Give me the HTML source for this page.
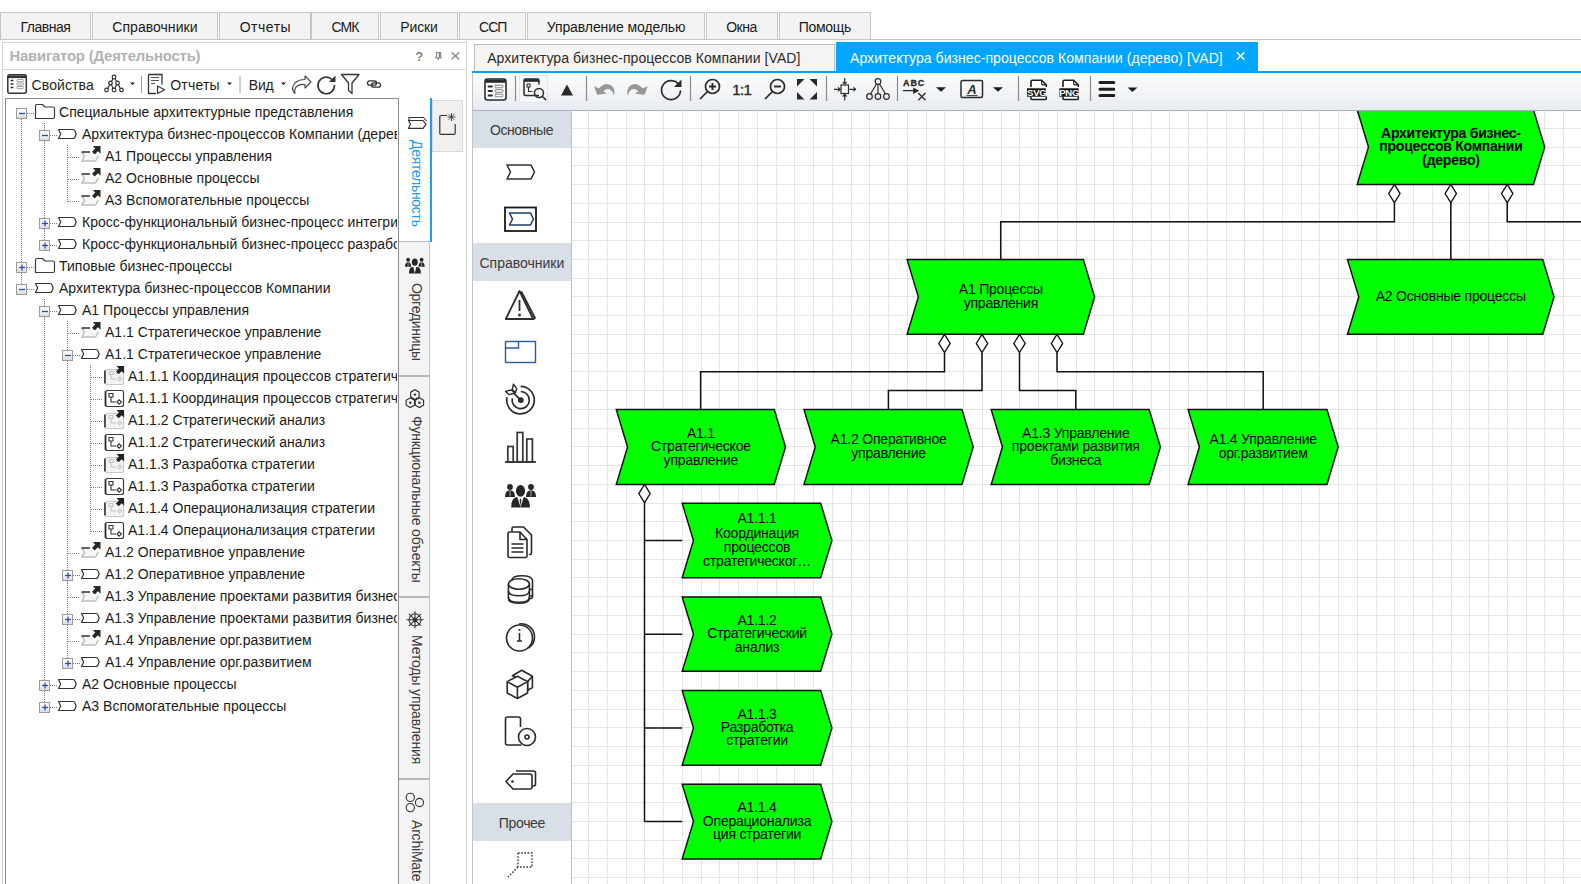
<!DOCTYPE html>
<html><head><meta charset="utf-8"><title>VAD</title>
<style>
html,body{margin:0;padding:0;width:1581px;height:884px;overflow:hidden;background:#fff;}
body{position:relative;font-family:"Liberation Sans", sans-serif;color:#1e1e1e;}
.a{position:absolute;}
.t{position:absolute;white-space:nowrap;line-height:16px;font-size:13.5px;}
.mt{position:absolute;top:12px;height:26px;background:#f3f3f3;border:1px solid #c6c6c6;}
svg{position:absolute;overflow:hidden;}
</style></head><body>
<div class="a" style="left:0;top:39px;width:1581px;height:1px;background:#c8c8c8"></div><div class="mt" style="left:0px;width:89px"></div><div class="t" style="left:20.45px;top:18.95px;font-size:14px;letter-spacing:-0.483px;color:#1a1a1a;">Главная</div><div class="mt" style="left:92px;width:124px"></div><div class="t" style="left:112.35px;top:18.95px;font-size:14px;letter-spacing:0.03px;color:#1a1a1a;">Справочники</div><div class="mt" style="left:219px;width:90px"></div><div class="t" style="left:239.70px;top:18.95px;font-size:14px;letter-spacing:0.52px;color:#1a1a1a;">Отчеты</div><div class="mt" style="left:311px;width:66px"></div><div class="t" style="left:331.55px;top:18.95px;font-size:14px;letter-spacing:-0.9px;color:#1a1a1a;">СМК</div><div class="mt" style="left:380px;width:76px"></div><div class="t" style="left:400.15px;top:18.95px;font-size:14px;letter-spacing:-0.075px;color:#1a1a1a;">Риски</div><div class="mt" style="left:459px;width:65px"></div><div class="t" style="left:478.95px;top:18.95px;font-size:14px;letter-spacing:-0.9px;color:#1a1a1a;">ССП</div><div class="mt" style="left:527px;width:176px"></div><div class="t" style="left:546.75px;top:18.95px;font-size:14px;letter-spacing:-0.088px;color:#1a1a1a;">Управление моделью</div><div class="mt" style="left:706px;width:70px"></div><div class="t" style="left:726.15px;top:18.95px;font-size:14px;letter-spacing:-0.433px;color:#1a1a1a;">Окна</div><div class="mt" style="left:779px;width:90px"></div><div class="t" style="left:798.80px;top:18.95px;font-size:14px;letter-spacing:-0.32px;color:#1a1a1a;">Помощь</div><div class="a" style="left:2px;top:42px;width:463px;height:850px;border:1px solid #d2d2d2;background:#fff"></div><div class="t" style="left:9.50px;top:47.87px;font-size:14.8px;letter-spacing:-0.152px;color:#b0b2b5;font-weight:bold;">Навигатор (Деятельность)</div><div class="a" style="left:3px;top:69px;width:462px;height:1px;background:#d2d2d2"></div><svg style="left:410px;top:48px" width="56" height="18" viewBox="0 0 56 18">
<text x="9.4" y="12.9" font-family="Liberation Sans" font-weight="bold" font-size="12.5" fill="#7d7d7d" text-anchor="middle">?</text>
<path d="M26.5 9.5V4.5h4.3" fill="none" stroke="#8a8a8a" stroke-width="1.1"/><rect x="28.6" y="4" width="2.6" height="5.4" fill="#8a8a8a"/>
<path d="M25 9.8h7M28.4 10v2.2" stroke="#8a8a8a" stroke-width="1.2"/>
<path d="M41.6 4.5l7.6 6.8M49.2 4.5l-7.6 6.8" stroke="#8a8a8a" stroke-width="1.5"/>
</svg><svg style="left:0px;top:70px" width="398" height="28" viewBox="0 70 398 28">
<g fill="none" stroke="#333" stroke-linejoin="round">
<rect x="7.8" y="74.8" width="18.5" height="18.5" rx="2" stroke-width="1.5" fill="#fff"/>
<path d="M7.8 76.8h18.5" stroke-width="2.6"/>
<path d="M10.5 80.5h3M10.5 84h3M10.5 87.5h3" stroke-width="1.7"/>
<rect x="17" y="79.5" width="6.5" height="2.2" rx="0.8" stroke="#888" stroke-width="0.8"/>
<rect x="17" y="83" width="6.5" height="2.2" rx="0.8" stroke="#888" stroke-width="0.8"/>
<rect x="17" y="86.5" width="6.5" height="2.2" rx="0.8" stroke="#888" stroke-width="0.8"/>
</g>
<g stroke="#333" stroke-width="1.2" fill="#fff">
<path d="M114 77l-3.5 6M114 77l3.5 6M110.5 83l-3 6M110.5 83l3 6M117.5 83l-3 6M117.5 83l3 6"/>
<circle cx="114" cy="77" r="1.8"/><circle cx="110.5" cy="83" r="1.8"/><circle cx="117.5" cy="83" r="1.8"/>
<circle cx="106.5" cy="90" r="1.8"/><circle cx="114" cy="90" r="1.8"/><circle cx="121.5" cy="90" r="1.8"/>
</g>
<path d="M130 82.5h5l-2.5 2.5z" fill="#222"/>
<path d="M141.5 76v17" stroke="#a0a0a0" stroke-width="1"/>
<path d="M148.5 74.5h13.5v10M148.5 74.5v19h7.5" stroke="#333" stroke-width="1.3" fill="none"/>
<path d="M151 77.5h8M151 80.5h8M151 83.5h4" stroke="#555" stroke-width="1"/>
<path d="M157.5 86v7.5l7-3.75z" stroke="#333" stroke-width="1.2" fill="#fff" stroke-linejoin="round"/>
<path d="M227 82.5h5l-2.5 2.5z" fill="#222"/>
<path d="M240 76v17" stroke="#a0a0a0" stroke-width="1"/>
<path d="M281 82.5h5l-2.5 2.5z" fill="#222"/>
<path d="M295 93.5q-5-4.5 0-10.5q3.5-3.5 10-3.5v-3.5l6 6-6 6v-3.5q-5.5-0.5-8.5 2q-2.5 2.5-1.5 7z" stroke="#444" stroke-width="1.1" fill="#fff" stroke-linejoin="round"/>
<path d="M332 79.5a8.3 8.3 0 1 0 2.5 5.5" stroke="#333" stroke-width="1.6" fill="none"/>
<path d="M335.5 75.5v6.5h-6.5z" fill="#333"/>
<path d="M341.5 74.5h17.5l-7 8.5v10.5l-3.5-3v-7.5z" stroke="#333" stroke-width="1.3" fill="none" stroke-linejoin="round"/>
<rect x="367.5" y="80.8" width="9" height="4.4" rx="2.2" stroke="#333" stroke-width="1.3" fill="none"/><rect x="371.5" y="82.8" width="9" height="4.4" rx="2.2" stroke="#333" stroke-width="1.3" fill="none"/>
</svg><div class="t" style="left:31.60px;top:76.55px;font-size:14px;letter-spacing:0.1px;color:#1e1e1e;">Свойства</div><div class="t" style="left:170.20px;top:76.85px;font-size:14px;letter-spacing:0.22px;color:#1e1e1e;">Отчеты</div><div class="t" style="left:248.80px;top:76.85px;font-size:14px;letter-spacing:-0.25px;color:#1e1e1e;">Вид</div><div class="a" style="left:5px;top:98px;width:392px;height:800px;border:1px solid #8a8f94;background:#fff"></div><svg style="left:0;top:0" width="398" height="884" viewBox="0 0 398 884"><defs><linearGradient id="eg" x1="0" y1="0" x2="0" y2="1"><stop offset="0" stop-color="#fdfdfd"/><stop offset="0.55" stop-color="#f0f0f0"/><stop offset="1" stop-color="#d9d9d9"/></linearGradient></defs><path d="M21.5 113V290 M27 113.5H34 M27 267.5H34 M27 289.5H34 M44.5 123V246 M50 135.5H57 M50 223.5H57 M50 245.5H57 M67.5 145V202 M68 157.5H80 M68 179.5H80 M68 201.5H80 M44.5 299V708 M50 311.5H57 M50 685.5H57 M50 707.5H57 M67.5 321V664 M68 333.5H80 M73 355.5H80 M68 553.5H80 M73 575.5H80 M68 597.5H80 M73 619.5H80 M68 641.5H80 M73 663.5H80 M90.5 365V532 M91 377.5H103 M91 399.5H103 M91 421.5H103 M91 443.5H103 M91 465.5H103 M91 487.5H103 M91 509.5H103 M91 531.5H103" stroke="#7a7a7a" stroke-width="1" stroke-dasharray="1 1" fill="none" shape-rendering="crispEdges"/><rect x="16.5" y="108.5" width="10" height="10" fill="url(#eg)" stroke="#9b9b9b" stroke-width="1"/><path d="M19 113.5h6" stroke="#2a4fb0" stroke-width="1.3"/><path d="M35.5 118.5V106.0q0-1.5 1.5-1.5h5.5l2.5 2.5h8q1.5 0 1.5 1.5V117.0q0 1.5-1.5 1.5z" fill="#fff" stroke="#3a3a3a" stroke-width="1.2" stroke-linejoin="round"/><rect x="39.5" y="130.5" width="10" height="10" fill="url(#eg)" stroke="#9b9b9b" stroke-width="1"/><path d="M42 135.5h6" stroke="#2a4fb0" stroke-width="1.3"/><path d="M58.5 129.5H73q1.5 0 2 1.5l1.2 3-1.2 3q-0.5 1.5-2 1.5H58.5l2.2-4.5z" fill="#fff" stroke="#333" stroke-width="1.2" stroke-linejoin="round"/><path d="M82 152l2.3 4.5-2.3 4.5H94.5q1.5 0 2-1.5l1.8-3.5" fill="#f7f7f7" stroke="#bdbdbd" stroke-width="1.5"/><path d="M81.5 152H90" stroke="#2e2e2e" stroke-width="1.5"/><path d="M92.8 146h7.7v7.7l-2.5-2.5-3.3 3.3-2.7-2.7 3.3-3.3z" fill="#262626"/><path d="M82 174l2.3 4.5-2.3 4.5H94.5q1.5 0 2-1.5l1.8-3.5" fill="#f7f7f7" stroke="#bdbdbd" stroke-width="1.5"/><path d="M81.5 174H90" stroke="#2e2e2e" stroke-width="1.5"/><path d="M92.8 168h7.7v7.7l-2.5-2.5-3.3 3.3-2.7-2.7 3.3-3.3z" fill="#262626"/><path d="M82 196l2.3 4.5-2.3 4.5H94.5q1.5 0 2-1.5l1.8-3.5" fill="#f7f7f7" stroke="#bdbdbd" stroke-width="1.5"/><path d="M81.5 196H90" stroke="#2e2e2e" stroke-width="1.5"/><path d="M92.8 190h7.7v7.7l-2.5-2.5-3.3 3.3-2.7-2.7 3.3-3.3z" fill="#262626"/><rect x="39.5" y="218.5" width="10" height="10" fill="url(#eg)" stroke="#9b9b9b" stroke-width="1"/><path d="M42 223.5h6" stroke="#2a4fb0" stroke-width="1.3"/><path d="M45 220.5v6" stroke="#2a4fb0" stroke-width="1.3"/><path d="M58.5 217.5H73q1.5 0 2 1.5l1.2 3-1.2 3q-0.5 1.5-2 1.5H58.5l2.2-4.5z" fill="#fff" stroke="#333" stroke-width="1.2" stroke-linejoin="round"/><rect x="39.5" y="240.5" width="10" height="10" fill="url(#eg)" stroke="#9b9b9b" stroke-width="1"/><path d="M42 245.5h6" stroke="#2a4fb0" stroke-width="1.3"/><path d="M45 242.5v6" stroke="#2a4fb0" stroke-width="1.3"/><path d="M58.5 239.5H73q1.5 0 2 1.5l1.2 3-1.2 3q-0.5 1.5-2 1.5H58.5l2.2-4.5z" fill="#fff" stroke="#333" stroke-width="1.2" stroke-linejoin="round"/><rect x="16.5" y="262.5" width="10" height="10" fill="url(#eg)" stroke="#9b9b9b" stroke-width="1"/><path d="M19 267.5h6" stroke="#2a4fb0" stroke-width="1.3"/><path d="M22 264.5v6" stroke="#2a4fb0" stroke-width="1.3"/><path d="M35.5 272.5V260.0q0-1.5 1.5-1.5h5.5l2.5 2.5h8q1.5 0 1.5 1.5V271.0q0 1.5-1.5 1.5z" fill="#fff" stroke="#3a3a3a" stroke-width="1.2" stroke-linejoin="round"/><rect x="16.5" y="284.5" width="10" height="10" fill="url(#eg)" stroke="#9b9b9b" stroke-width="1"/><path d="M19 289.5h6" stroke="#2a4fb0" stroke-width="1.3"/><path d="M35.5 283.5H50q1.5 0 2 1.5l1.2 3-1.2 3q-0.5 1.5-2 1.5H35.5l2.2-4.5z" fill="#fff" stroke="#333" stroke-width="1.2" stroke-linejoin="round"/><rect x="39.5" y="306.5" width="10" height="10" fill="url(#eg)" stroke="#9b9b9b" stroke-width="1"/><path d="M42 311.5h6" stroke="#2a4fb0" stroke-width="1.3"/><path d="M58.5 305.5H73q1.5 0 2 1.5l1.2 3-1.2 3q-0.5 1.5-2 1.5H58.5l2.2-4.5z" fill="#fff" stroke="#333" stroke-width="1.2" stroke-linejoin="round"/><path d="M82 328l2.3 4.5-2.3 4.5H94.5q1.5 0 2-1.5l1.8-3.5" fill="#f7f7f7" stroke="#bdbdbd" stroke-width="1.5"/><path d="M81.5 328H90" stroke="#2e2e2e" stroke-width="1.5"/><path d="M92.8 322h7.7v7.7l-2.5-2.5-3.3 3.3-2.7-2.7 3.3-3.3z" fill="#262626"/><rect x="62.5" y="350.5" width="10" height="10" fill="url(#eg)" stroke="#9b9b9b" stroke-width="1"/><path d="M65 355.5h6" stroke="#2a4fb0" stroke-width="1.3"/><path d="M81.5 349.5H96q1.5 0 2 1.5l1.2 3-1.2 3q-0.5 1.5-2 1.5H81.5l2.2-4.5z" fill="#fff" stroke="#333" stroke-width="1.2" stroke-linejoin="round"/><rect x="105.5" y="369.5" width="18" height="15" rx="2" fill="#f4f4f4" stroke="#c9c9c9" stroke-width="1.2"/><path d="M104.9 370.5v13" stroke="#333" stroke-width="1.6"/><path d="M109 371.5h4v3h-4zM111 374.5v4.5h5.5M118 379l1.8-2 1.8 2-1.8 2z" fill="none" stroke="#c2c2c2" stroke-width="1.1"/><path d="M116.5 366h7.6v7.6l-2.4-2.4-3 3-2.8-2.8 3-3z" fill="#222"/><rect x="105.5" y="390.5" width="18" height="16" rx="2" fill="#fff" stroke="#3a3a3a" stroke-width="1.2"/><path d="M105.5 391v15" stroke="#222" stroke-width="1.6"/><path d="M109 393.5h4v3.5h-4zM111 397v5h5M117 402l2.2-2.2 2.2 2.2-2.2 2.2z" fill="none" stroke="#333" stroke-width="1.1"/><rect x="105.5" y="413.5" width="18" height="15" rx="2" fill="#f4f4f4" stroke="#c9c9c9" stroke-width="1.2"/><path d="M104.9 414.5v13" stroke="#333" stroke-width="1.6"/><path d="M109 415.5h4v3h-4zM111 418.5v4.5h5.5M118 423l1.8-2 1.8 2-1.8 2z" fill="none" stroke="#c2c2c2" stroke-width="1.1"/><path d="M116.5 410h7.6v7.6l-2.4-2.4-3 3-2.8-2.8 3-3z" fill="#222"/><rect x="105.5" y="434.5" width="18" height="16" rx="2" fill="#fff" stroke="#3a3a3a" stroke-width="1.2"/><path d="M105.5 435v15" stroke="#222" stroke-width="1.6"/><path d="M109 437.5h4v3.5h-4zM111 441v5h5M117 446l2.2-2.2 2.2 2.2-2.2 2.2z" fill="none" stroke="#333" stroke-width="1.1"/><rect x="105.5" y="457.5" width="18" height="15" rx="2" fill="#f4f4f4" stroke="#c9c9c9" stroke-width="1.2"/><path d="M104.9 458.5v13" stroke="#333" stroke-width="1.6"/><path d="M109 459.5h4v3h-4zM111 462.5v4.5h5.5M118 467l1.8-2 1.8 2-1.8 2z" fill="none" stroke="#c2c2c2" stroke-width="1.1"/><path d="M116.5 454h7.6v7.6l-2.4-2.4-3 3-2.8-2.8 3-3z" fill="#222"/><rect x="105.5" y="478.5" width="18" height="16" rx="2" fill="#fff" stroke="#3a3a3a" stroke-width="1.2"/><path d="M105.5 479v15" stroke="#222" stroke-width="1.6"/><path d="M109 481.5h4v3.5h-4zM111 485v5h5M117 490l2.2-2.2 2.2 2.2-2.2 2.2z" fill="none" stroke="#333" stroke-width="1.1"/><rect x="105.5" y="501.5" width="18" height="15" rx="2" fill="#f4f4f4" stroke="#c9c9c9" stroke-width="1.2"/><path d="M104.9 502.5v13" stroke="#333" stroke-width="1.6"/><path d="M109 503.5h4v3h-4zM111 506.5v4.5h5.5M118 511l1.8-2 1.8 2-1.8 2z" fill="none" stroke="#c2c2c2" stroke-width="1.1"/><path d="M116.5 498h7.6v7.6l-2.4-2.4-3 3-2.8-2.8 3-3z" fill="#222"/><rect x="105.5" y="522.5" width="18" height="16" rx="2" fill="#fff" stroke="#3a3a3a" stroke-width="1.2"/><path d="M105.5 523v15" stroke="#222" stroke-width="1.6"/><path d="M109 525.5h4v3.5h-4zM111 529v5h5M117 534l2.2-2.2 2.2 2.2-2.2 2.2z" fill="none" stroke="#333" stroke-width="1.1"/><path d="M82 548l2.3 4.5-2.3 4.5H94.5q1.5 0 2-1.5l1.8-3.5" fill="#f7f7f7" stroke="#bdbdbd" stroke-width="1.5"/><path d="M81.5 548H90" stroke="#2e2e2e" stroke-width="1.5"/><path d="M92.8 542h7.7v7.7l-2.5-2.5-3.3 3.3-2.7-2.7 3.3-3.3z" fill="#262626"/><rect x="62.5" y="570.5" width="10" height="10" fill="url(#eg)" stroke="#9b9b9b" stroke-width="1"/><path d="M65 575.5h6" stroke="#2a4fb0" stroke-width="1.3"/><path d="M68 572.5v6" stroke="#2a4fb0" stroke-width="1.3"/><path d="M81.5 569.5H96q1.5 0 2 1.5l1.2 3-1.2 3q-0.5 1.5-2 1.5H81.5l2.2-4.5z" fill="#fff" stroke="#333" stroke-width="1.2" stroke-linejoin="round"/><path d="M82 592l2.3 4.5-2.3 4.5H94.5q1.5 0 2-1.5l1.8-3.5" fill="#f7f7f7" stroke="#bdbdbd" stroke-width="1.5"/><path d="M81.5 592H90" stroke="#2e2e2e" stroke-width="1.5"/><path d="M92.8 586h7.7v7.7l-2.5-2.5-3.3 3.3-2.7-2.7 3.3-3.3z" fill="#262626"/><rect x="62.5" y="614.5" width="10" height="10" fill="url(#eg)" stroke="#9b9b9b" stroke-width="1"/><path d="M65 619.5h6" stroke="#2a4fb0" stroke-width="1.3"/><path d="M68 616.5v6" stroke="#2a4fb0" stroke-width="1.3"/><path d="M81.5 613.5H96q1.5 0 2 1.5l1.2 3-1.2 3q-0.5 1.5-2 1.5H81.5l2.2-4.5z" fill="#fff" stroke="#333" stroke-width="1.2" stroke-linejoin="round"/><path d="M82 636l2.3 4.5-2.3 4.5H94.5q1.5 0 2-1.5l1.8-3.5" fill="#f7f7f7" stroke="#bdbdbd" stroke-width="1.5"/><path d="M81.5 636H90" stroke="#2e2e2e" stroke-width="1.5"/><path d="M92.8 630h7.7v7.7l-2.5-2.5-3.3 3.3-2.7-2.7 3.3-3.3z" fill="#262626"/><rect x="62.5" y="658.5" width="10" height="10" fill="url(#eg)" stroke="#9b9b9b" stroke-width="1"/><path d="M65 663.5h6" stroke="#2a4fb0" stroke-width="1.3"/><path d="M68 660.5v6" stroke="#2a4fb0" stroke-width="1.3"/><path d="M81.5 657.5H96q1.5 0 2 1.5l1.2 3-1.2 3q-0.5 1.5-2 1.5H81.5l2.2-4.5z" fill="#fff" stroke="#333" stroke-width="1.2" stroke-linejoin="round"/><rect x="39.5" y="680.5" width="10" height="10" fill="url(#eg)" stroke="#9b9b9b" stroke-width="1"/><path d="M42 685.5h6" stroke="#2a4fb0" stroke-width="1.3"/><path d="M45 682.5v6" stroke="#2a4fb0" stroke-width="1.3"/><path d="M58.5 679.5H73q1.5 0 2 1.5l1.2 3-1.2 3q-0.5 1.5-2 1.5H58.5l2.2-4.5z" fill="#fff" stroke="#333" stroke-width="1.2" stroke-linejoin="round"/><rect x="39.5" y="702.5" width="10" height="10" fill="url(#eg)" stroke="#9b9b9b" stroke-width="1"/><path d="M42 707.5h6" stroke="#2a4fb0" stroke-width="1.3"/><path d="M45 704.5v6" stroke="#2a4fb0" stroke-width="1.3"/><path d="M58.5 701.5H73q1.5 0 2 1.5l1.2 3-1.2 3q-0.5 1.5-2 1.5H58.5l2.2-4.5z" fill="#fff" stroke="#333" stroke-width="1.2" stroke-linejoin="round"/></svg><div class="a" style="left:6px;top:99px;width:391px;height:785px;overflow:hidden"><div class="t" style="left:53.00px;top:4.75px;font-size:14px;letter-spacing:0.02px;color:#1a1a1a;">Специальные архитектурные представления</div><div class="t" style="left:76.00px;top:26.75px;font-size:14px;letter-spacing:0.02px;color:#1a1a1a;">Архитектура бизнес-процессов Компании (дерево)</div><div class="t" style="left:99.00px;top:48.75px;font-size:14px;letter-spacing:0.02px;color:#1a1a1a;">A1 Процессы управления</div><div class="t" style="left:99.00px;top:70.75px;font-size:14px;letter-spacing:0.02px;color:#1a1a1a;">A2 Основные процессы</div><div class="t" style="left:99.00px;top:92.75px;font-size:14px;letter-spacing:0.02px;color:#1a1a1a;">A3 Вспомогательные процессы</div><div class="t" style="left:76.00px;top:114.75px;font-size:14px;letter-spacing:0.02px;color:#1a1a1a;">Кросс-функциональный бизнес-процесс интегрированного управления</div><div class="t" style="left:76.00px;top:136.75px;font-size:14px;letter-spacing:0.02px;color:#1a1a1a;">Кросс-функциональный бизнес-процесс разработки</div><div class="t" style="left:53.00px;top:158.75px;font-size:14px;letter-spacing:0.02px;color:#1a1a1a;">Типовые бизнес-процессы</div><div class="t" style="left:53.00px;top:180.75px;font-size:14px;letter-spacing:0.02px;color:#1a1a1a;">Архитектура бизнес-процессов Компании</div><div class="t" style="left:76.00px;top:202.75px;font-size:14px;letter-spacing:0.02px;color:#1a1a1a;">A1 Процессы управления</div><div class="t" style="left:99.00px;top:224.75px;font-size:14px;letter-spacing:0.02px;color:#1a1a1a;">A1.1 Стратегическое управление</div><div class="t" style="left:99.00px;top:246.75px;font-size:14px;letter-spacing:0.02px;color:#1a1a1a;">A1.1 Стратегическое управление</div><div class="t" style="left:122.00px;top:268.75px;font-size:14px;letter-spacing:0.02px;color:#1a1a1a;">A1.1.1 Координация процессов стратегического управления</div><div class="t" style="left:122.00px;top:290.75px;font-size:14px;letter-spacing:0.02px;color:#1a1a1a;">A1.1.1 Координация процессов стратегического управления</div><div class="t" style="left:122.00px;top:312.75px;font-size:14px;letter-spacing:0.02px;color:#1a1a1a;">A1.1.2 Стратегический анализ</div><div class="t" style="left:122.00px;top:334.75px;font-size:14px;letter-spacing:0.02px;color:#1a1a1a;">A1.1.2 Стратегический анализ</div><div class="t" style="left:122.00px;top:356.75px;font-size:14px;letter-spacing:0.02px;color:#1a1a1a;">A1.1.3 Разработка стратегии</div><div class="t" style="left:122.00px;top:378.75px;font-size:14px;letter-spacing:0.02px;color:#1a1a1a;">A1.1.3 Разработка стратегии</div><div class="t" style="left:122.00px;top:400.75px;font-size:14px;letter-spacing:0.02px;color:#1a1a1a;">A1.1.4 Операционализация стратегии</div><div class="t" style="left:122.00px;top:422.75px;font-size:14px;letter-spacing:0.02px;color:#1a1a1a;">A1.1.4 Операционализация стратегии</div><div class="t" style="left:99.00px;top:444.75px;font-size:14px;letter-spacing:0.02px;color:#1a1a1a;">A1.2 Оперативное управление</div><div class="t" style="left:99.00px;top:466.75px;font-size:14px;letter-spacing:0.02px;color:#1a1a1a;">A1.2 Оперативное управление</div><div class="t" style="left:99.00px;top:488.75px;font-size:14px;letter-spacing:0.02px;color:#1a1a1a;">A1.3 Управление проектами развития бизнеса</div><div class="t" style="left:99.00px;top:510.75px;font-size:14px;letter-spacing:0.02px;color:#1a1a1a;">A1.3 Управление проектами развития бизнеса</div><div class="t" style="left:99.00px;top:532.75px;font-size:14px;letter-spacing:0.02px;color:#1a1a1a;">A1.4 Управление орг.развитием</div><div class="t" style="left:99.00px;top:554.75px;font-size:14px;letter-spacing:0.02px;color:#1a1a1a;">A1.4 Управление орг.развитием</div><div class="t" style="left:76.00px;top:576.75px;font-size:14px;letter-spacing:0.02px;color:#1a1a1a;">A2 Основные процессы</div><div class="t" style="left:76.00px;top:598.75px;font-size:14px;letter-spacing:0.02px;color:#1a1a1a;">A3 Вспомогательные процессы</div></div><div class="a" style="left:399px;top:98px;width:31px;height:144px;background:#fff;border-right:2px solid #1e9ff2"></div><div class="t" style="left:424.65px;top:139.50px;font-size:14px;letter-spacing:-0.282px;color:#1a9bf0;transform-origin:0 0;transform:rotate(90deg)">Деятельность</div><div class="a" style="left:399px;top:241px;width:30px;height:133px;background:#f4f4f4;border-top:1px solid #b9b9b9;border-bottom:1px solid #b9b9b9;border-right:1px solid #c4c4c4"></div><div class="t" style="left:424.65px;top:282.50px;font-size:14px;letter-spacing:-0.278px;color:#3a3a3a;transform-origin:0 0;transform:rotate(90deg)">Оргединицы</div><div class="a" style="left:399px;top:375px;width:30px;height:219px;background:#f4f4f4;border-top:2px solid #b9b9b9;border-bottom:1px solid #b9b9b9;border-right:1px solid #c4c4c4"></div><div class="t" style="left:424.65px;top:415.50px;font-size:14px;letter-spacing:-0.167px;color:#3a3a3a;transform-origin:0 0;transform:rotate(90deg)">Функциональные объекты</div><div class="a" style="left:399px;top:596px;width:30px;height:180px;background:#f4f4f4;border-top:2px solid #b9b9b9;border-bottom:1px solid #b9b9b9;border-right:1px solid #c4c4c4"></div><div class="t" style="left:424.65px;top:634.80px;font-size:14px;letter-spacing:-0.125px;color:#3a3a3a;transform-origin:0 0;transform:rotate(90deg)">Методы управления</div><div class="a" style="left:399px;top:778px;width:30px;height:120px;background:#f4f4f4;border-top:2px solid #b9b9b9;border-bottom:1px solid #b9b9b9;border-right:1px solid #c4c4c4"></div><div class="t" style="left:424.65px;top:819.50px;font-size:14px;letter-spacing:-0.2px;color:#3a3a3a;transform-origin:0 0;transform:rotate(90deg)">ArchiMate</div><svg style="left:398px;top:98px" width="34" height="786" viewBox="398 98 34 786">
<path d="M408.5 120.5h14.5l3 3.8-3 4h-14.5l2-4z" fill="#fff" stroke="#333" stroke-width="1.2" stroke-linejoin="round"/>
<path d="M409 120v-2.5h14.5l3 3.5" fill="none" stroke="#333" stroke-width="1.1"/>
<g fill="#262626">
<ellipse cx="408.1" cy="259.8" rx="1.9" ry="2"/><path d="M405 266.8q0-4.3 3.1-4.5q3.1 0.2 3.1 4.5z"/>
<ellipse cx="421.6" cy="259.8" rx="1.9" ry="2"/><path d="M418.5 266.8q0-4.3 3.1-4.5q3.1 0.2 3.1 4.5z"/>
<ellipse cx="414.8" cy="262.2" rx="2.9" ry="3.6"/><path d="M409 273.4q-0.2-5.8 3.2-6.4h5.2q3.5 0.6 3.5 6.4z"/>
</g>
<path d="M413.3 267l1.5 6.4 1.5-6.4z" fill="#f2f2f2"/><path d="M408.1 262.5v4M421.6 262.5v4" stroke="#bbb" stroke-width="0.7"/>
<g fill="none" stroke="#2a2a2a" stroke-width="1.1">
<path d="M414.9 389.7l4.2 2.45v4.9l-4.2 2.45-4.2-2.45v-4.9z"/>
<path d="M410.3 397.8l4.2 2.45v4.9l-4.2 2.45-4.2-2.45v-4.9z"/>
<path d="M419.4 397.8l4.2 2.45v4.9l-4.2 2.45-4.2-2.45v-4.9z"/>
</g>
<g fill="#2a2a2a"><circle cx="414.9" cy="394.6" r="1.2"/><circle cx="410.3" cy="402.7" r="1.2"/><circle cx="419.4" cy="402.7" r="1.2"/></g>
<g fill="none" stroke="#333" stroke-width="1.1">
<circle cx="415" cy="619.8" r="6"/><circle cx="415" cy="619.8" r="1.8"/>
<path d="M415 611.3v17M406.5 619.8h17M409 613.8l12 12M421 613.8l-12 12"/>
</g>
<g fill="none" stroke="#333" stroke-width="1.1">
<circle cx="410.3" cy="797.4" r="4.1"/><circle cx="410.3" cy="807.6" r="4.1"/><circle cx="419.5" cy="802.5" r="4.1"/>
</g>
</svg><div class="a" style="left:432px;top:100px;width:29px;height:50px;background:#f0f0f0;border:1px solid #d9d9d9"></div>
<svg style="left:432px;top:100px" width="30" height="51" viewBox="0 0 30 51">
<path d="M15 15.5H9q-1.2 0-1.2 1.2v16.5q0 1.2 1.2 1.2h13q1.2 0 1.2-1.2V24" fill="none" stroke="#333" stroke-width="1.2"/>
<path d="M19.5 13v8M15.5 17h8M16.7 14.2l5.6 5.6M22.3 14.2l-5.6 5.6" stroke="#333" stroke-width="0.9"/>
</svg><div class="a" style="left:472px;top:73px;width:1px;height:811px;background:#c4c4c4"></div><div class="a" style="left:474px;top:44px;width:359px;height:27px;background:#f4f4f4;border:1px solid #bdbdbd;border-bottom:none"></div><div class="t" style="left:487.20px;top:49.95px;font-size:14px;letter-spacing:0.071px;color:#2a2a2a;">Архитектура бизнес-процессов Компании [VAD]</div><div class="a" style="left:836px;top:42px;width:422px;height:29px;background:#00a6ff"></div><div class="t" style="left:850.00px;top:49.95px;font-size:14px;letter-spacing:0.053px;color:#ffffff;">Архитектура бизнес-процессов Компании (дерево) [VAD]</div><svg style="left:1234px;top:49px" width="14" height="14" viewBox="0 0 14 14"><path d="M2.8 3.2l7.6 7.6M10.4 3.2l-7.6 7.6" stroke="#fff" stroke-width="1.5"/></svg><div class="a" style="left:472px;top:71px;width:1109px;height:2px;background:#00a4ff"></div><div class="a" style="left:473px;top:73px;width:1108px;height:37px;background:linear-gradient(#fdfdfd,#e8ecf0)"></div><div class="a" style="left:473px;top:110px;width:1108px;height:1px;background:#a9b3bc"></div><svg style="left:473px;top:73px" width="700" height="37" viewBox="473 73 700 37">
<g fill="none" stroke="#2a2a2a" stroke-linecap="round" stroke-linejoin="round">
<!-- properties -->
<rect x="485" y="79" width="21" height="21" rx="2.5" stroke-width="1.6" fill="#fff"/>
<path d="M485.8 81.2h19.4" stroke-width="3.2" stroke-linecap="butt"/>
<path d="M488.5 86.5h3.5M488.5 91h3.5M488.5 95.5h3.5" stroke-width="1.8"/>
<rect x="495" y="85.2" width="8" height="2.6" rx="1" stroke="#777" stroke-width="0.9"/>
<rect x="495" y="89.7" width="8" height="2.6" rx="1" stroke="#777" stroke-width="0.9"/>
<rect x="495" y="94.2" width="8" height="2.6" rx="1" stroke="#777" stroke-width="0.9"/>
</g>
<path d="M515.5 76v25" stroke="#8a8a8a" stroke-width="1.2"/>
<rect x="519.5" y="75.5" width="28" height="27" fill="#f6f7f8" stroke="#e3e6e9" stroke-width="1"/>
<g fill="none" stroke="#2a2a2a" stroke-width="1.5" stroke-linejoin="round">
<path d="M539 95.5h-13.5q-1.5 0-1.5-1.5V80.5q0-1.5 1.5-1.5h12q1.5 0 1.5 1.5v4"/>
<path d="M524 80.5h15" stroke-width="2.6"/>
<path d="M527 84h3v3h-3zM528.5 87v4.5h4" stroke-width="1.1"/>
<circle cx="539" cy="93" r="4.5"/><path d="M542.3 96.3l3.8 3.8"/>
</g>
<path d="M561 95.5l6-11 6 11z" fill="#2a2a2a"/>
<path d="M586.5 76v25" stroke="#8a8a8a" stroke-width="1.2"/>
<g fill="#979797">
<path d="M594 86.1L597.1 94.8L606.8 93.4L603.3 91.2Q607 87.6 610.3 89.6Q613.2 91.8 614 95.8Q615.6 88.6 611.2 85.4Q605.2 81.2 598.6 88.6Z"/>
<path d="M594 86.1L597.1 94.8L606.8 93.4L603.3 91.2Q607 87.6 610.3 89.6Q613.2 91.8 614 95.8Q615.6 88.6 611.2 85.4Q605.2 81.2 598.6 88.6Z" transform="translate(1241.7 0) scale(-1 1)"/>
</g>
<g fill="none" stroke="#2a2a2a" stroke-width="1.7">
<path d="M679 85a9.5 9.5 0 1 0 1.5 5.5"/>
</g>
<path d="M681.5 79.5v7.5h-7.5z" fill="#2a2a2a"/>
<path d="M690.5 76v25" stroke="#8a8a8a" stroke-width="1.2"/>
<g fill="none" stroke="#2a2a2a" stroke-width="1.7">
<circle cx="712.5" cy="86.5" r="7"/><path d="M707.5 91.5l-7.5 7.5"/><path d="M709 86.5h7M712.5 83v7" stroke-width="1.9"/>
<circle cx="777.5" cy="86.5" r="7"/><path d="M772.5 91.5l-7.5 7.5"/><path d="M774 86.5h7" stroke-width="1.9"/>
</g>
<text x="741.7" y="95.2" font-family="Liberation Sans" font-size="15" fill="#2a2a2a" text-anchor="middle" letter-spacing="-0.6" stroke="#2a2a2a" stroke-width="0.35">1:1</text>
<g fill="#2a2a2a">
<path d="M797 79h7.5l-7.5 7.5z M817 79h-7.5l7.5 7.5z M797 99.5h7.5l-7.5-7.5z M817 99.5h-7.5l7.5-7.5z"/>
</g>
<path d="M826.5 76v25" stroke="#8a8a8a" stroke-width="1.2"/>
<g fill="none" stroke="#2a2a2a" stroke-width="1.2">
<rect x="841" y="85" width="7.5" height="8.5"/>
<path d="M834 89.3h6M849.5 89.3h6M844.7 78v6M844.7 94.5v6"/>
<path d="M838 87.3l2 2-2 2M853.5 87.3l2 2-2 2M842.7 82l2 2 2-2M842.7 96.5l2-2 2 2"/>
<circle cx="878" cy="81.5" r="2.8"/><circle cx="869.5" cy="96.5" r="2.8"/><circle cx="878" cy="96.5" r="2.8"/><circle cx="886.5" cy="96.5" r="2.8"/>
<path d="M878 84.3v9.4M876.5 84l-6 10M879.5 84l6 10"/>
</g>
<path d="M897.5 76v25" stroke="#8a8a8a" stroke-width="1.2"/>
<text x="903" y="85.7" font-family="Liberation Sans" font-size="9" font-weight="bold" fill="#2a2a2a" letter-spacing="0.9" stroke="#2a2a2a" stroke-width="0.3">ABC</text>
<g fill="none" stroke="#2a2a2a" stroke-width="1.4">
<path d="M903 90.7h11M918.3 93l7.2 7.2M925.5 93l-7.2 7.2" stroke-width="1.3"/>
</g>
<path d="M913.2 87.4L919.3 90.7L913.2 94Z" fill="#2a2a2a"/>
<path d="M936 87.2h10l-5 4.6z" fill="#1e1e1e"/>
<rect x="961" y="80.5" width="21.5" height="17" rx="1.5" fill="none" stroke="#2a2a2a" stroke-width="1.5"/>
<text x="972" y="93.6" font-family="Liberation Sans" font-size="13" font-style="italic" font-weight="bold" fill="#2a2a2a" text-anchor="middle">A</text>
<path d="M966.5 95.6h11" stroke="#333" stroke-width="1"/>
<path d="M993 87.2h10l-5 4.6z" fill="#1e1e1e"/>
<path d="M1018.5 76v25" stroke="#8a8a8a" stroke-width="1.2"/>
<g fill="#fff" stroke="#1e1e1e" stroke-width="1.6" stroke-linejoin="round">
<path d="M1031 87V81.4q0-1.2 1.2-1.2h9.5l4.6 4.6V87M1031 96.5v2q0 1 1 1h13.3q1 0 1-1v-2"/>
<path d="M1041.7 80.5v3.3q0 1 1 1h3.3" fill="none" stroke-width="1.2"/>
<path d="M1063 87V81.4q0-1.2 1.2-1.2h9.5l4.6 4.6V87M1063 96.5v2q0 1 1 1h13.3q1 0 1-1v-2"/>
<path d="M1073.7 80.5v3.3q0 1 1 1h3.3" fill="none" stroke-width="1.2"/>
</g>
<rect x="1027" y="88.3" width="18.8" height="8.4" fill="#111"/>
<rect x="1059.4" y="88.3" width="19.2" height="8.4" fill="#111"/>
<text x="1036.8" y="96.2" font-family="Liberation Sans" font-size="9.6" font-weight="bold" fill="#fff" text-anchor="middle" letter-spacing="-0.2">SVG</text>
<text x="1069.2" y="96.2" font-family="Liberation Sans" font-size="9.6" font-weight="bold" fill="#fff" text-anchor="middle" letter-spacing="-0.3">PNG</text>
<path d="M1090.5 76v25" stroke="#8a8a8a" stroke-width="1.2"/>
<path d="M1100 82.6h13.8M1100 89.2h13.8M1100 95.5h13.8" stroke="#1e1e1e" stroke-width="3" stroke-linecap="round"/>
<path d="M1127.5 87.5h10l-5 4.6z" fill="#1e1e1e"/>
</svg><div class="a" style="left:473px;top:111px;width:98px;height:773px;background:#fff;border-right:1px solid #b9c1c9"></div><div class="a" style="left:473px;top:111px;width:98px;height:37px;background:#d8dfe6"></div><div class="t" style="left:490.00px;top:122.45px;font-size:14px;letter-spacing:-0.429px;color:#3a3a3a;">Основные</div><div class="a" style="left:473px;top:243px;width:98px;height:38px;background:#d8dfe6"></div><div class="t" style="left:479.50px;top:254.95px;font-size:14px;letter-spacing:0.0px;color:#3a3a3a;">Справочники</div><div class="a" style="left:473px;top:803px;width:98px;height:38px;background:#d8dfe6"></div><div class="t" style="left:498.85px;top:814.95px;font-size:14px;letter-spacing:-0.34px;color:#3a3a3a;">Прочее</div><svg style="left:473px;top:111px" width="98" height="773" viewBox="473 111 98 773">
<g fill="none" stroke="#333" stroke-width="1.6" stroke-linejoin="round">
<path d="M507 165h24l3.5 7-3.5 7h-24l3.5-7z"/>
</g>
<rect x="505" y="207.5" width="31" height="23.5" fill="#fff" stroke="#1a1a1a" stroke-width="1.8"/>
<path d="M509.5 213h21l3 6-3 6h-21l3-6z" fill="none" stroke="#1f3d6b" stroke-width="1.6" stroke-linejoin="round"/>
<g fill="none" stroke="#2e2e2e" stroke-width="1.8" stroke-linejoin="round">
<path d="M505.8 319l13.7-28 13.7 28z"/><path d="M521.2 291.5l13.8 26.5-2 1.5"/>
<path d="M519.5 300v11" stroke-width="1.8"/><circle cx="519.5" cy="315" r="0.6" fill="#333"/>
</g>
<g fill="none" stroke="#2b5797" stroke-width="1.4">
<rect x="505.5" y="341.5" width="30" height="21"/><path d="M505.5 348h13v-6.5"/>
</g>
<g fill="none" stroke="#2a2a2a" stroke-width="1.7" stroke-linecap="butt">
<path d="M520.6 386.3A13.8 13.8 0 1 1 507 397.2"/>
<path d="M520.8 391.5A8.6 8.6 0 1 1 512.3 398.4"/>
<path d="M520.8 400.1L514 393.3"/>
<path d="M513.4 384.3L516.8 388.6L515.4 392.4L512.3 389.6Z M505.6 391.4L511.4 390L514.8 393L509 394.6Z" fill="#fff" stroke-width="1.4" stroke-linejoin="round"/>
</g>
<circle cx="520.8" cy="400.1" r="2.9" fill="#2a2a2a"/>
<g fill="none" stroke="#333" stroke-width="1.5">
<path d="M505 462h31" stroke-width="1.8"/><rect x="507.8" y="446.5" width="5.4" height="15.5" stroke-width="1.7"/><rect x="517.2" y="432.5" width="5.6" height="29.5" stroke-width="1.7"/><rect x="526.8" y="439" width="5.6" height="23" stroke-width="1.7"/>
</g>
<g fill="#262626">
<ellipse cx="510" cy="486.9" rx="2.9" ry="3"/><path d="M505 497q0-6.5 5-6.8q5 0.3 5 6.8z"/>
<ellipse cx="531" cy="486.9" rx="2.9" ry="3"/><path d="M526 497q0-6.5 5-6.8q5 0.3 5 6.8z"/>
<ellipse cx="520.5" cy="490.9" rx="4.6" ry="5.9"/><path d="M511.2 507.5q-0.5-9 5.5-10.5h7.5q6 1.5 5.8 10.5z"/>
</g>
<path d="M510 491v5.5M531 491v5.5" stroke="#bbb" stroke-width="0.9"/>
<path d="M517.2 497l3.3 10 3.3-10z" fill="#fff"/><path d="M520.5 498.5l-0.9 1.5 0.9 6 0.9-6z" fill="#262626"/>
<g fill="#fff" stroke="#2a2a2a" stroke-width="1.6" stroke-linejoin="round">
<path d="M512 531v-2.5q0-1.5 1.5-1.5h10l8 8v18q0 1.5-1.5 1.5h-1"/>
<path d="M509.5 532q-1.5 0-1.5 1.5v22.5q0 1.5 1.5 1.5h16q1.5 0 1.5-1.5v-16.5l-7-7.5z"/>
<path d="M520 532v7.5h7" fill="none"/>
<path d="M511.5 544h12M511.5 548h12M511.5 552h12" stroke-width="1.4"/>
</g>
<g fill="#fff" stroke="#2a2a2a" stroke-width="1.6">
<path d="M511.5 580.5q1-4.8 10.5-4.8t10.5 4.5v17q0 1.2-3 1.5"/>
<path d="M529.4 589.5h3M529.4 596h3"/>
<path d="M508.4 584v14.2q0 5 10.5 5t10.5-5V584"/>
<ellipse cx="518.9" cy="584" rx="10.5" ry="5.2"/>
<path d="M508.4 590.8q0 5 10.5 5t10.5-5M508.4 597.3q0 5 10.5 5t10.5-5" fill="none"/>
</g>
<g fill="#fff" stroke="#2a2a2a" stroke-width="1.6">
<path d="M519 624a13 13 0 0 1 15.5 13a13 13 0 0 1-6 11"/>
<circle cx="519.5" cy="638" r="13"/>
</g>
<path d="M519.5 633v8M517 641h5" stroke="#2a2a2a" stroke-width="1.6"/><circle cx="519.5" cy="630" r="1.1" fill="#2a2a2a"/>
<g fill="#fff" stroke="#2a2a2a" stroke-width="1.6" stroke-linejoin="round">
<path d="M512.4 675.8L521.7 670.3L532.4 676.3V687.6L527.6 690.3V681.6Z"/>
<path d="M527.6 681.6L532.4 676.3"/>
<path d="M517.4 676.3L507.2 681.6V693L517.4 698.5L527.6 693V681.6Z"/>
<path d="M507.2 681.6L517.4 687.2L527.6 681.6M517.4 687.2V698.5"/>
</g>
<g fill="none" stroke="#2a2a2a" stroke-width="1.6" stroke-linejoin="round">
<path d="M521.5 745h-14q-2 0-2-2V719q0-2 2-2h11q2 0 2 2v8"/>
<circle cx="527" cy="737" r="8.5" fill="#fff"/><circle cx="527" cy="737" r="2"/>
</g>
<g fill="#fff" stroke="#2a2a2a" stroke-width="1.6" stroke-linejoin="round">
<path d="M516 771h17.5q2 0 2 2v11q0 2-2 2h-2"/>
<path d="M513 774h17q2 0 2 2v11q0 2-2 2h-17l-7-7.5z"/>
</g>
<circle cx="512.5" cy="781.5" r="1.3" fill="#2a2a2a"/>
<path d="M518 853h14v14h-14v-14M518 867l-10 10" fill="none" stroke="#333" stroke-width="1.4" stroke-dasharray="1.6 1.6"/>
</svg><svg style="left:572px;top:111px" width="1009" height="773" viewBox="572 111 1009 773"><path d="M588.5 111V884 M607.5 111V884 M626.5 111V884 M644.5 111V884 M663.5 111V884 M682.5 111V884 M701.5 111V884 M719.5 111V884 M738.5 111V884 M757.5 111V884 M776.5 111V884 M794.5 111V884 M813.5 111V884 M832.5 111V884 M851.5 111V884 M869.5 111V884 M888.5 111V884 M907.5 111V884 M926.5 111V884 M944.5 111V884 M963.5 111V884 M982.5 111V884 M1001.5 111V884 M1019.5 111V884 M1038.5 111V884 M1057.5 111V884 M1076.5 111V884 M1094.5 111V884 M1113.5 111V884 M1132.5 111V884 M1151.5 111V884 M1169.5 111V884 M1188.5 111V884 M1207.5 111V884 M1226.5 111V884 M1244.5 111V884 M1263.5 111V884 M1282.5 111V884 M1301.5 111V884 M1319.5 111V884 M1338.5 111V884 M1357.5 111V884 M1376.5 111V884 M1394.5 111V884 M1413.5 111V884 M1432.5 111V884 M1451.5 111V884 M1469.5 111V884 M1488.5 111V884 M1507.5 111V884 M1526.5 111V884 M1544.5 111V884 M1563.5 111V884 M572 128.5H1581 M572 147.5H1581 M572 165.5H1581 M572 184.5H1581 M572 203.5H1581 M572 222.5H1581 M572 240.5H1581 M572 259.5H1581 M572 278.5H1581 M572 296.5H1581 M572 315.5H1581 M572 334.5H1581 M572 353.5H1581 M572 371.5H1581 M572 390.5H1581 M572 409.5H1581 M572 428.5H1581 M572 446.5H1581 M572 465.5H1581 M572 484.5H1581 M572 503.5H1581 M572 521.5H1581 M572 540.5H1581 M572 559.5H1581 M572 577.5H1581 M572 596.5H1581 M572 615.5H1581 M572 634.5H1581 M572 652.5H1581 M572 671.5H1581 M572 690.5H1581 M572 709.5H1581 M572 727.5H1581 M572 746.5H1581 M572 765.5H1581 M572 783.5H1581 M572 802.5H1581 M572 821.5H1581 M572 840.5H1581 M572 858.5H1581 M572 877.5H1581" stroke="#e5e5e5" stroke-width="1" fill="none"/><path d="M1394.4 202.6V221.8H1000.7V259.7 M1450.8 202.6V259.7 M1507.2 202.6V221.8H1600 M944.5 352.6V371.7H700.6V409.7 M982 352.6V390.4H888.4V409.7 M1019.5 352.6V390.6H1075.8V409.7 M1057 352.6V371.7H1263.2V409.7 M644.5 502.6V821.4 M644.5 540.6H682.2 M644.5 634.3H682.2 M644.5 728.1H682.2 M644.5 821.4H682.2" stroke="#111" stroke-width="1.5" fill="none"/><path d="M1357.20 109.80H1533.45L1544.70 147.10L1533.45 184.40H1357.20L1368.45 147.10Z" fill="#00ff00" stroke="#111" stroke-width="1.5" stroke-linejoin="miter"/><text x="1450.95" y="137.71" text-anchor="middle" font-family="Liberation Sans" font-size="14" letter-spacing="-0.24" font-weight="bold" fill="#000">Архитектура бизнес-</text><text x="1450.95" y="151.16" text-anchor="middle" font-family="Liberation Sans" font-size="14" letter-spacing="-0.24" font-weight="bold" fill="#000">процессов Компании</text><text x="1450.95" y="164.61" text-anchor="middle" font-family="Liberation Sans" font-size="14" letter-spacing="-0.24" font-weight="bold" fill="#000">(дерево)</text><path d="M907.10 259.60H1083.35L1094.60 296.90L1083.35 334.20H907.10L918.35 296.90Z" fill="#00ff00" stroke="#111" stroke-width="1.5" stroke-linejoin="miter"/><text x="1000.85" y="294.24" text-anchor="middle" font-family="Liberation Sans" font-size="14" letter-spacing="-0.2"  fill="#000">A1 Процессы</text><text x="1000.85" y="307.69" text-anchor="middle" font-family="Liberation Sans" font-size="14" letter-spacing="-0.2"  fill="#000">управления</text><path d="M1347.50 259.60H1542.75L1554.00 296.90L1542.75 334.20H1347.50L1358.75 296.90Z" fill="#00ff00" stroke="#111" stroke-width="1.5" stroke-linejoin="miter"/><text x="1450.75" y="300.96" text-anchor="middle" font-family="Liberation Sans" font-size="14" letter-spacing="-0.2"  fill="#000">A2 Основные процессы</text><path d="M616.30 409.60H774.25L785.50 447.00L774.25 484.40H616.30L627.55 447.00Z" fill="#00ff00" stroke="#111" stroke-width="1.5" stroke-linejoin="miter"/><text x="700.90" y="437.61" text-anchor="middle" font-family="Liberation Sans" font-size="14" letter-spacing="-0.2"  fill="#000">A1.1</text><text x="700.90" y="451.06" text-anchor="middle" font-family="Liberation Sans" font-size="14" letter-spacing="-0.2"  fill="#000">Стратегическое</text><text x="700.90" y="464.51" text-anchor="middle" font-family="Liberation Sans" font-size="14" letter-spacing="-0.2"  fill="#000">управление</text><path d="M804.00 409.60H961.95L973.20 447.00L961.95 484.40H804.00L815.25 447.00Z" fill="#00ff00" stroke="#111" stroke-width="1.5" stroke-linejoin="miter"/><text x="888.60" y="444.33" text-anchor="middle" font-family="Liberation Sans" font-size="14" letter-spacing="-0.2"  fill="#000">A1.2 Оперативное</text><text x="888.60" y="457.78" text-anchor="middle" font-family="Liberation Sans" font-size="14" letter-spacing="-0.2"  fill="#000">управление</text><path d="M991.20 409.60H1149.15L1160.40 447.00L1149.15 484.40H991.20L1002.45 447.00Z" fill="#00ff00" stroke="#111" stroke-width="1.5" stroke-linejoin="miter"/><text x="1075.80" y="437.61" text-anchor="middle" font-family="Liberation Sans" font-size="14" letter-spacing="-0.2"  fill="#000">A1.3 Управление</text><text x="1075.80" y="451.06" text-anchor="middle" font-family="Liberation Sans" font-size="14" letter-spacing="-0.2"  fill="#000">проектами развития</text><text x="1075.80" y="464.51" text-anchor="middle" font-family="Liberation Sans" font-size="14" letter-spacing="-0.2"  fill="#000">бизнеса</text><path d="M1188.10 409.60H1326.95L1338.20 447.00L1326.95 484.40H1188.10L1199.35 447.00Z" fill="#00ff00" stroke="#111" stroke-width="1.5" stroke-linejoin="miter"/><text x="1263.15" y="444.33" text-anchor="middle" font-family="Liberation Sans" font-size="14" letter-spacing="-0.2"  fill="#000">A1.4 Управление</text><text x="1263.15" y="457.78" text-anchor="middle" font-family="Liberation Sans" font-size="14" letter-spacing="-0.2"  fill="#000">орг.развитием</text><path d="M682.20 503.20H820.65L831.90 540.50L820.65 577.80H682.20L693.45 540.50Z" fill="#00ff00" stroke="#111" stroke-width="1.5" stroke-linejoin="miter"/><text x="757.05" y="523.41" text-anchor="middle" font-family="Liberation Sans" font-size="14" letter-spacing="-0.2"  fill="#000">A1.1.1</text><text x="757.05" y="537.51" text-anchor="middle" font-family="Liberation Sans" font-size="14" letter-spacing="-0.2"  fill="#000">Координация</text><text x="757.05" y="551.61" text-anchor="middle" font-family="Liberation Sans" font-size="14" letter-spacing="-0.2"  fill="#000">процессов</text><text x="757.05" y="565.71" text-anchor="middle" font-family="Liberation Sans" font-size="14" letter-spacing="-0.2"  fill="#000">стратегическог…</text><path d="M682.20 596.90H820.65L831.90 634.10L820.65 671.30H682.20L693.45 634.10Z" fill="#00ff00" stroke="#111" stroke-width="1.5" stroke-linejoin="miter"/><text x="757.05" y="624.71" text-anchor="middle" font-family="Liberation Sans" font-size="14" letter-spacing="-0.2"  fill="#000">A1.1.2</text><text x="757.05" y="638.16" text-anchor="middle" font-family="Liberation Sans" font-size="14" letter-spacing="-0.2"  fill="#000">Стратегический</text><text x="757.05" y="651.61" text-anchor="middle" font-family="Liberation Sans" font-size="14" letter-spacing="-0.2"  fill="#000">анализ</text><path d="M682.20 690.50H820.65L831.90 727.90L820.65 765.30H682.20L693.45 727.90Z" fill="#00ff00" stroke="#111" stroke-width="1.5" stroke-linejoin="miter"/><text x="757.05" y="718.51" text-anchor="middle" font-family="Liberation Sans" font-size="14" letter-spacing="-0.2"  fill="#000">A1.1.3</text><text x="757.05" y="731.96" text-anchor="middle" font-family="Liberation Sans" font-size="14" letter-spacing="-0.2"  fill="#000">Разработка</text><text x="757.05" y="745.41" text-anchor="middle" font-family="Liberation Sans" font-size="14" letter-spacing="-0.2"  fill="#000">стратегии</text><path d="M682.20 784.30H820.65L831.90 821.60L820.65 858.90H682.20L693.45 821.60Z" fill="#00ff00" stroke="#111" stroke-width="1.5" stroke-linejoin="miter"/><text x="757.05" y="812.21" text-anchor="middle" font-family="Liberation Sans" font-size="14" letter-spacing="-0.2"  fill="#000">A1.1.4</text><text x="757.05" y="825.66" text-anchor="middle" font-family="Liberation Sans" font-size="14" letter-spacing="-0.2"  fill="#000">Операционализа</text><text x="757.05" y="839.11" text-anchor="middle" font-family="Liberation Sans" font-size="14" letter-spacing="-0.2"  fill="#000">ция стратегии</text><path d="M1394.40 184.40L1400.10 193.55L1394.40 202.70L1388.70 193.55Z" fill="#fff" stroke="#111" stroke-width="1.3"/><path d="M1450.80 184.40L1456.50 193.55L1450.80 202.70L1445.10 193.55Z" fill="#fff" stroke="#111" stroke-width="1.3"/><path d="M1507.20 184.40L1512.90 193.55L1507.20 202.70L1501.50 193.55Z" fill="#fff" stroke="#111" stroke-width="1.3"/><path d="M944.50 334.30L950.20 343.45L944.50 352.60L938.80 343.45Z" fill="#fff" stroke="#111" stroke-width="1.3"/><path d="M982.00 334.30L987.70 343.45L982.00 352.60L976.30 343.45Z" fill="#fff" stroke="#111" stroke-width="1.3"/><path d="M1019.50 334.30L1025.20 343.45L1019.50 352.60L1013.80 343.45Z" fill="#fff" stroke="#111" stroke-width="1.3"/><path d="M1057.00 334.30L1062.70 343.45L1057.00 352.60L1051.30 343.45Z" fill="#fff" stroke="#111" stroke-width="1.3"/><path d="M644.50 484.40L650.20 493.55L644.50 502.70L638.80 493.55Z" fill="#fff" stroke="#111" stroke-width="1.3"/></svg></body></html>
